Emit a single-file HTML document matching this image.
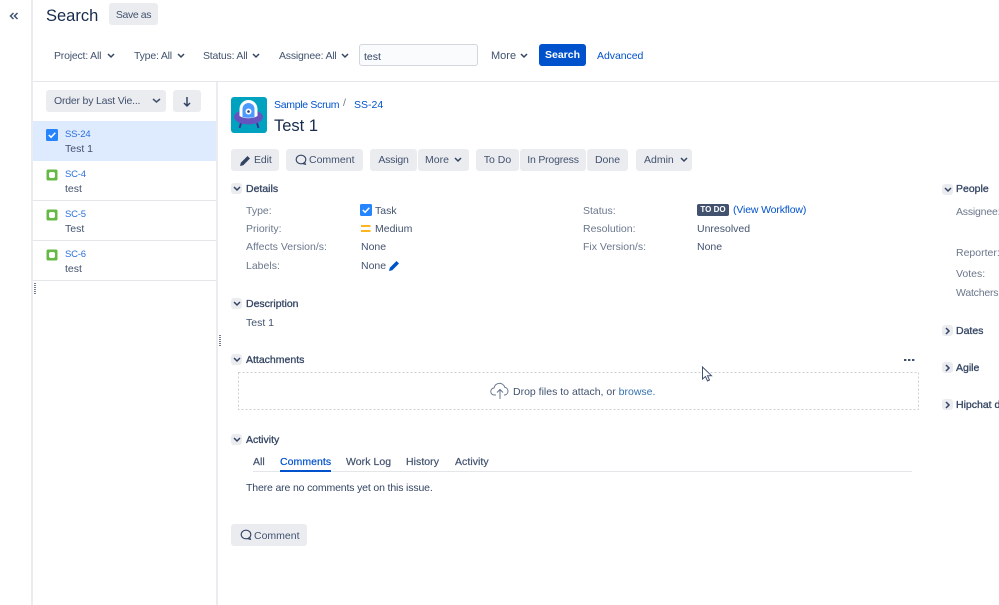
<!DOCTYPE html>
<html><head><meta charset="utf-8"><style>
html,body{margin:0;padding:0;background:#fff}
#p{position:relative;width:999px;height:605px;overflow:hidden;background:#fff;font:10.5px/14px "Liberation Sans",sans-serif;color:#172b4d}
#p div,#p svg{position:absolute}
.t{position:absolute;white-space:nowrap}
.g{color:#6b778c}
.l{color:#0052cc}
.m{color:#42526e}
.b{position:absolute;background:#ebecf0;border-radius:3px;height:22px;line-height:22px;text-align:center;color:#42526e;white-space:nowrap}
.h{color:#344563;-webkit-text-stroke:.3px #344563}
.s{-webkit-text-stroke:.2px currentColor;letter-spacing:.05px}
.tw{position:absolute;width:11px;height:11px;background:#ebecf0;border-radius:3px}
.n{letter-spacing:-.2px}
</style></head><body><div id="p">
<!-- structure lines -->
<div style="left:31px;top:0;width:2px;height:605px;background:#ebecf0"></div>
<div style="left:33px;top:81px;width:966px;height:1px;background:#e4e6ea"></div>
<div style="left:216px;top:82px;width:2px;height:523px;background:#ebecf0"></div>
<svg style="left:9px;top:12px" width="10" height="8"><path d="M4.500 1L1.500 4l3 3M8.500 1l-3 3 3 3" fill="none" stroke="#42526e" stroke-width="1.500"/></svg>

<span class="t" style="left:46px;top:4px;font-size:16.500px;line-height:24px;color:#172b4d">Search</span>
<div class="b" style="left:109px;top:3px;width:49px;line-height:24px;letter-spacing:-.4px">Save as</div>

<span class="t m n" style="left:54px;top:49px">Project: All</span>
<svg style="left:107px;top:53px" width="8" height="6"><path d="M1 1l3 3 3-3" fill="none" stroke="#344563" stroke-width="1.500"/></svg>
<span class="t m n" style="left:134px;top:49px">Type: All</span>
<svg style="left:177px;top:53px" width="8" height="6"><path d="M1 1l3 3 3-3" fill="none" stroke="#344563" stroke-width="1.500"/></svg>
<span class="t m n" style="left:203px;top:49px">Status: All</span>
<svg style="left:252px;top:53px" width="8" height="6"><path d="M1 1l3 3 3-3" fill="none" stroke="#344563" stroke-width="1.500"/></svg>
<span class="t m n" style="left:279px;top:49px">Assignee: All</span>
<svg style="left:341px;top:53px" width="8" height="6"><path d="M1 1l3 3 3-3" fill="none" stroke="#344563" stroke-width="1.500"/></svg>
<div style="left:359px;top:44px;width:117px;height:20px;background:#fafbfc;border:1px solid #d3d6dc;border-radius:3px"></div>
<span class="t" style="left:364px;top:50px;color:#344563">test</span>
<span class="t m" style="left:491px;top:49px;font-size:11px">More</span>
<svg style="left:520px;top:53px" width="8" height="6"><path d="M1 1l3 3 3-3" fill="none" stroke="#344563" stroke-width="1.500"/></svg>
<div style="left:539px;top:44px;width:47px;height:22px;background:#0052cc;border-radius:3px;color:#fff;font-weight:bold;text-align:center;line-height:22px">Search</div>
<span class="t l" style="left:597px;top:49px;letter-spacing:-.05px">Advanced</span>

<!-- left panel -->
<div class="b n" style="left:46px;top:90px;width:120px;text-align:left"><span style="margin-left:8px">Order by Last Vie...</span></div>
<svg style="left:152px;top:98px" width="9" height="6"><path d="M1 1l3.500 3 3.500-3" fill="none" stroke="#42526e" stroke-width="1.500"/></svg>
<div class="b" style="left:173px;top:90px;width:28px"></div>
<svg style="left:182px;top:96px" width="10" height="12"><path d="M5 1v9M2 7l3 3 3-3" fill="none" stroke="#344563" stroke-width="1.500"/></svg>

<div style="left:33px;top:121px;width:183px;height:40px;background:#deebff"></div>
<div style="left:33px;top:200px;width:183px;height:1px;background:#e4e6ea"></div>
<div style="left:33px;top:240px;width:183px;height:1px;background:#e4e6ea"></div>
<div style="left:33px;top:280px;width:183px;height:1px;background:#e4e6ea"></div>

<svg style="left:46px;top:129px" width="12" height="12"><rect width="12" height="12" rx="1.500" fill="#2684ff"/><path d="M2.800 6l2.300 2.300L9.300 3.800" fill="none" stroke="#fff" stroke-width="1.500"/></svg>
<span class="t" style="left:65px;top:127px;font-size:9.500px;line-height:15px;color:#2a6fdb;letter-spacing:-.2px">SS-24</span>
<span class="t m" style="left:65px;top:142px">Test 1</span>

<svg style="left:46px;top:169px" width="12" height="12"><rect width="11" height="11" x=".5" y=".5" rx="1.500" fill="#65ba43"/><rect x="3" y="3" width="6" height="6" rx="2" fill="#fff"/></svg>
<span class="t" style="left:65px;top:167px;font-size:9.500px;line-height:15px;color:#2a6fdb;letter-spacing:-.2px">SC-4</span>
<span class="t m" style="left:65px;top:182px">test</span>

<svg style="left:46px;top:209px" width="12" height="12"><rect width="11" height="11" x=".5" y=".5" rx="1.500" fill="#65ba43"/><rect x="3" y="3" width="6" height="6" rx="2" fill="#fff"/></svg>
<span class="t" style="left:65px;top:207px;font-size:9.500px;line-height:15px;color:#2a6fdb;letter-spacing:-.2px">SC-5</span>
<span class="t m" style="left:65px;top:222px">Test</span>

<svg style="left:46px;top:249px" width="12" height="12"><rect width="11" height="11" x=".5" y=".5" rx="1.500" fill="#65ba43"/><rect x="3" y="3" width="6" height="6" rx="2" fill="#fff"/></svg>
<span class="t" style="left:65px;top:247px;font-size:9.500px;line-height:15px;color:#2a6fdb;letter-spacing:-.2px">SC-6</span>
<span class="t m" style="left:65px;top:262px">test</span>

<svg style="left:34px;top:283px" width="2" height="11"><path d="M1 0v11" stroke="#42526e" stroke-dasharray="1 1" stroke-width="1.500"/></svg>
<svg style="left:219px;top:335px" width="2" height="11"><path d="M1 0v11" stroke="#42526e" stroke-dasharray="1 1" stroke-width="1.500"/></svg>

<!-- issue header -->
<svg style="left:231px;top:97px" width="36" height="36" viewBox="0 0 36 36"><rect width="36" height="36" rx="3" fill="#00a3bf"/><path d="M10 26l-1.500 5M26 26l1.500 5" stroke="#403294" stroke-width="2"/><ellipse cx="17.500" cy="20" rx="14.500" ry="7.500" fill="#6554c0"/><path d="M8.500 19V12a9 9 0 0118 0v7c-5 3-13 3-18 0z" fill="#fff"/><path d="M11.500 20V12a6 6 0 0112 0v8c-4 1-8 1-12 0z" fill="#4c9aff"/><circle cx="17.500" cy="14.500" r="3" fill="#fff"/><circle cx="17.500" cy="14.500" r="1.300" fill="#253858"/></svg>
<span class="t l" style="left:274px;top:98px;letter-spacing:-.3px">Sample Scrum</span>
<span class="t g" style="left:343px;top:96px">/</span>
<span class="t l" style="left:354px;top:98px">SS-24</span>
<span class="t" style="left:274px;top:114px;font-size:16.500px;line-height:24px;color:#172b4d">Test 1</span>

<!-- toolbar -->
<div class="b" style="left:231px;top:149px;width:48px;text-align:left"><span style="margin-left:23px;letter-spacing:-.1px">Edit</span></div>
<svg style="left:240px;top:155px" width="11" height="11" viewBox="0 0 11 11"><path d="M0 11l.8-3.300L7.500 1l2.500 2.500-6.700 6.700z" fill="#344563"/></svg>
<div class="b" style="left:286px;top:149px;width:77px;text-align:left"><span style="margin-left:23px">Comment</span></div>
<svg style="left:295px;top:154px" width="12" height="12" viewBox="0 0 12 12"><ellipse cx="6" cy="5.500" rx="4.800" ry="4.300" fill="none" stroke="#344563" stroke-width="1.100"/><path d="M7.500 9.600l3 .8-.9-2.400" fill="none" stroke="#344563" stroke-width="1"/></svg>
<div class="b n" style="left:370px;top:149px;width:47px">Assign</div>
<div class="b" style="left:418px;top:149px;width:51px;text-align:left"><span style="margin-left:7px">More</span></div>
<svg style="left:454px;top:157px" width="8" height="6"><path d="M1 1l3 3 3-3" fill="none" stroke="#344563" stroke-width="1.500"/></svg>
<div class="b" style="left:476px;top:149px;width:43px">To Do</div>
<div class="b n" style="left:520px;top:149px;width:66px">In Progress</div>
<div class="b" style="left:587px;top:149px;width:41px">Done</div>
<div class="b" style="left:636px;top:149px;width:56px;text-align:left"><span style="margin-left:8px">Admin</span></div>
<svg style="left:680px;top:157px" width="8" height="6"><path d="M1 1l3 3 3-3" fill="none" stroke="#344563" stroke-width="1.500"/></svg>

<!-- Details -->
<div class="tw" style="left:231px;top:183px"></div>
<svg style="left:233px;top:186px" width="8" height="6"><path d="M1 1l3 3 3-3" fill="none" stroke="#344563" stroke-width="1.500"/></svg>
<span class="t h" style="left:246px;top:182px">Details</span>
<span class="t g" style="left:246px;top:204px">Type:</span>
<span class="t g" style="left:246px;top:222px">Priority:</span>
<span class="t g" style="left:246px;top:240px">Affects Version/s:</span>
<span class="t g" style="left:246px;top:259px">Labels:</span>
<svg style="left:360px;top:204px" width="12" height="12"><rect width="12" height="12" rx="1.500" fill="#2684ff"/><path d="M2.800 6l2.300 2.300L9.300 3.800" fill="none" stroke="#fff" stroke-width="1.500"/></svg>
<span class="t m" style="left:375px;top:204px">Task</span>
<svg style="left:361px;top:225px" width="10" height="8"><path d="M0 1h9.500M0 6h9.500" stroke="#ffab00" stroke-width="1.800"/></svg>
<span class="t m" style="left:375px;top:222px">Medium</span>
<span class="t m" style="left:361px;top:240px">None</span>
<span class="t m" style="left:361px;top:259px">None</span>
<svg style="left:389px;top:260px" width="11" height="11" viewBox="0 0 11 11"><path d="M0 11l.8-3.300L7.500 1l2.500 2.500-6.700 6.700z" fill="#0052cc"/></svg>

<span class="t g" style="left:583px;top:204px">Status:</span>
<span class="t g" style="left:583px;top:222px">Resolution:</span>
<span class="t g" style="left:583px;top:240px">Fix Version/s:</span>
<div style="left:697px;top:204px;width:32px;height:12px;background:#42526e;border-radius:2px;color:#fff;font-size:8px;font-weight:bold;line-height:12px;text-align:center">TO DO</div>
<span class="t l" style="left:733px;top:203px;letter-spacing:-.15px">(View Workflow)</span>
<span class="t m" style="left:697px;top:222px">Unresolved</span>
<span class="t m" style="left:697px;top:240px">None</span>

<!-- Description -->
<div class="tw" style="left:231px;top:298px"></div>
<svg style="left:233px;top:301px" width="8" height="6"><path d="M1 1l3 3 3-3" fill="none" stroke="#344563" stroke-width="1.500"/></svg>
<span class="t h" style="left:246px;top:297px">Description</span>
<span class="t m" style="left:246px;top:316px">Test 1</span>

<!-- Attachments -->
<div class="tw" style="left:231px;top:354px"></div>
<svg style="left:233px;top:357px" width="8" height="6"><path d="M1 1l3 3 3-3" fill="none" stroke="#344563" stroke-width="1.500"/></svg>
<span class="t h" style="left:246px;top:353px">Attachments</span>
<svg style="left:904px;top:358px" width="11" height="4"><path d="M0 2h2.400M4 2h2.400M8 2h2.400" stroke="#42526e" stroke-width="2"/></svg>
<svg style="left:238px;top:372px" width="681" height="38"><rect x=".5" y=".5" width="680" height="37" fill="none" stroke="#ccd0d6" stroke-dasharray="2 2"/></svg>
<svg style="left:490px;top:382px" width="20" height="18" viewBox="0 0 20 18"><path d="M6 13H4.500a3.500 3.500 0 01-.5-7 5.500 5.500 0 0110.700-.8A4 4 0 0115 13h-1M10 17V8M7 10.500L10 7.500l3 3" fill="none" stroke="#6b778c" stroke-width="1"/></svg>
<span class="t m" style="left:513px;top:385px">Drop files to attach, or <span style="color:#3572b0">browse.</span></span>
<svg style="left:701px;top:366px" width="12" height="17" viewBox="0 0 12 17"><path d="M1.500 1v12l3-2.500 2 4.500 2-1-2-4.300h4z" fill="#fff" stroke="#42526e" stroke-width="1"/></svg>

<!-- Activity -->
<div class="tw" style="left:231px;top:434px"></div>
<svg style="left:233px;top:437px" width="8" height="6"><path d="M1 1l3 3 3-3" fill="none" stroke="#344563" stroke-width="1.500"/></svg>
<span class="t h" style="left:246px;top:433px">Activity</span>
<div style="left:253px;top:471px;width:659px;height:1px;background:#e4e6ea"></div>
<div style="left:280px;top:470px;width:51px;height:2px;background:#0052cc"></div>
<span class="t m s" style="left:253px;top:455px">All</span>
<span class="t s" style="left:280px;top:455px;color:#0052cc">Comments</span>
<span class="t m s" style="left:346px;top:455px">Work Log</span>
<span class="t m s" style="left:406px;top:455px">History</span>
<span class="t m s" style="left:455px;top:455px">Activity</span>
<span class="t" style="left:246px;top:481px;color:#344563;letter-spacing:-.15px">There are no comments yet on this issue.</span>
<div class="b" style="left:231px;top:524px;width:76px;text-align:left;line-height:24px"><span style="margin-left:23px">Comment</span></div>
<svg style="left:240px;top:529px" width="12" height="12" viewBox="0 0 12 12"><ellipse cx="6" cy="5.500" rx="4.800" ry="4.300" fill="none" stroke="#344563" stroke-width="1.100"/><path d="M7.500 9.600l3 .8-.9-2.400" fill="none" stroke="#344563" stroke-width="1"/></svg>

<!-- Right column -->
<div class="tw" style="left:942px;top:184px"></div>
<svg style="left:944px;top:187px" width="8" height="6"><path d="M1 1l3 3 3-3" fill="none" stroke="#344563" stroke-width="1.500"/></svg>
<span class="t h" style="left:956px;top:182px">People</span>
<span class="t g n" style="left:956px;top:205px">Assignee:</span>
<span class="t g" style="left:956px;top:246px">Reporter:</span>
<span class="t g" style="left:956px;top:267px">Votes:</span>
<span class="t g n" style="left:956px;top:286px">Watchers:</span>
<div class="tw" style="left:942px;top:325px"></div>
<svg style="left:945px;top:327px" width="6" height="8"><path d="M1 1l3 3-3 3" fill="none" stroke="#344563" stroke-width="1.500"/></svg>
<span class="t h" style="left:956px;top:324px">Dates</span>
<div class="tw" style="left:942px;top:362px"></div>
<svg style="left:945px;top:364px" width="6" height="8"><path d="M1 1l3 3-3 3" fill="none" stroke="#344563" stroke-width="1.500"/></svg>
<span class="t h" style="left:956px;top:361px">Agile</span>
<div class="tw" style="left:942px;top:399px"></div>
<svg style="left:945px;top:401px" width="6" height="8"><path d="M1 1l3 3-3 3" fill="none" stroke="#344563" stroke-width="1.500"/></svg>
<span class="t h" style="left:956px;top:398px">Hipchat discussions</span>
</div></body></html>
